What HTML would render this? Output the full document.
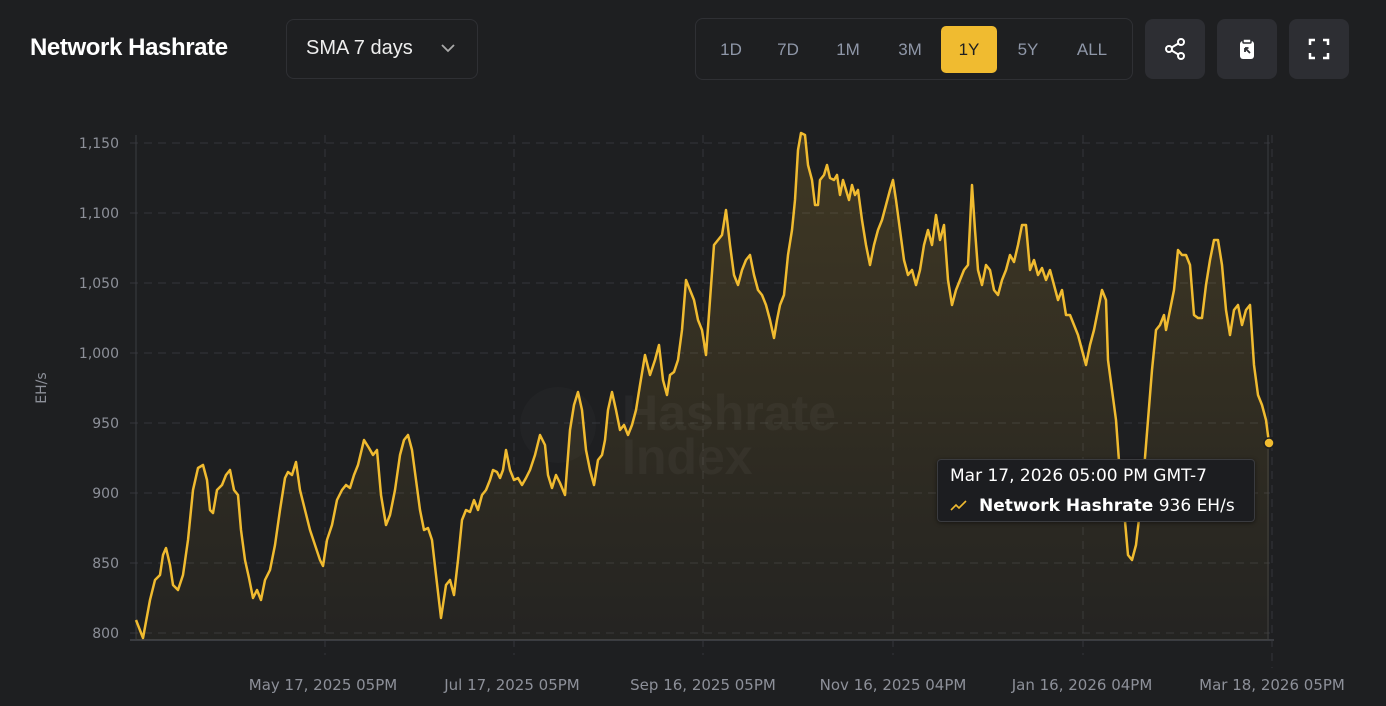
<!DOCTYPE html>
<html><head><meta charset="utf-8"><style>
*{box-sizing:border-box;margin:0;padding:0}
body{width:1386px;height:706px;background:#1e1f21;font-family:"Liberation Sans",sans-serif;position:relative;overflow:hidden;color:#fff}
.title{position:absolute;left:30px;top:34px;font-size:24px;font-weight:bold;letter-spacing:-0.4px}
.sel{position:absolute;left:286px;top:19px;width:192px;height:60px;border:1px solid #2f3034;border-radius:8px;font-size:20px;padding:17px 0 0 19px;color:#eee}
.sel svg{position:absolute;left:153px;top:23px}
.tabs{position:absolute;left:695px;top:18px;width:438px;height:62px;border:1px solid #2f3034;border-radius:8px}
.tab{position:absolute;top:7px;height:47px;line-height:47px;font-size:17px;color:#8f97a8;text-align:center;width:56px}
.tab.on{background:#f0bb30;color:#1e1f21;border-radius:5px}
.btn{position:absolute;top:19px;width:60px;height:60px;background:#2d2e33;border-radius:8px}
.btn svg{position:absolute;left:18px;top:18px}
.ax{font-size:14px;fill:#8d9099;font-family:"DejaVu Sans",sans-serif}
.tip{position:absolute;left:937px;top:459px;width:318px;height:63px;background:#1c1d20;border:1px solid #3a3b3f;border-radius:4px;box-shadow:0 1px 4px rgba(0,0,0,.5);font-family:"DejaVu Sans",sans-serif;font-size:17px;color:#fff}
</style></head><body>
<div class="title">Network Hashrate</div>
<div class="sel">SMA 7 days<svg width="16" height="10" viewBox="0 0 16 10"><path d="M2 2l6 6 6-6" stroke="#aaa" stroke-width="1.8" fill="none"/></svg></div>
<div class="tabs">
<div class="tab" style="left:7px">1D</div>
<div class="tab" style="left:64px">7D</div>
<div class="tab" style="left:124px">1M</div>
<div class="tab" style="left:186px">3M</div>
<div class="tab on" style="left:245px">1Y</div>
<div class="tab" style="left:304px">5Y</div>
<div class="tab" style="left:368px">ALL</div>
</div>
<div class="btn" style="left:1145px"><svg width="24" height="24" viewBox="0 0 24 24" fill="none" stroke="#fff" stroke-width="2"><circle cx="18" cy="5" r="3"/><circle cx="6" cy="12" r="3"/><circle cx="18" cy="19" r="3"/><path d="M8.6 13.5l6.8 4M15.4 6.5l-6.8 4"/></svg></div>
<div class="btn" style="left:1217px"><svg width="24" height="24" viewBox="0 0 24 24"><rect x="5" y="4" width="14" height="18" rx="3" fill="#fff"/><rect x="8" y="2" width="8" height="4" rx="1" fill="#fff" stroke="#2d2e33" stroke-width="1.5"/><path d="M10 11v4h0M10 11h3.5M10 11l5 5" stroke="#2d2e33" stroke-width="1.8" fill="none"/></svg></div>
<div class="btn" style="left:1289px"><svg width="24" height="24" viewBox="0 0 24 24" fill="none" stroke="#fff" stroke-width="2.5"><path d="M3 8V3h5M16 3h5v5M21 16v5h-5M8 21H3v-5"/></svg></div>

<svg width="1386" height="706" style="position:absolute;left:0;top:0">
<defs><linearGradient id="g" x1="0" y1="0" x2="0" y2="1"><stop offset="0" stop-color="#f0bb30" stop-opacity=".16"/><stop offset="1" stop-color="#f0bb30" stop-opacity=".03"/></linearGradient></defs>
<g stroke="#34363b" stroke-width="1" stroke-dasharray="8 6">
<line x1="130" y1="143" x2="1270" y2="143"/><line x1="130" y1="213" x2="1270" y2="213"/><line x1="130" y1="283" x2="1270" y2="283"/><line x1="130" y1="353" x2="1270" y2="353"/><line x1="130" y1="423" x2="1270" y2="423"/><line x1="130" y1="493" x2="1270" y2="493"/><line x1="130" y1="563" x2="1270" y2="563"/><line x1="130" y1="633" x2="1270" y2="633"/>
<line x1="325" y1="135" x2="325" y2="655"/><line x1="514" y1="135" x2="514" y2="655"/><line x1="703" y1="135" x2="703" y2="655"/><line x1="893" y1="135" x2="893" y2="655"/><line x1="1083" y1="135" x2="1083" y2="655"/><line x1="1272" y1="135" x2="1272" y2="668"/>
</g>
<line x1="136" y1="135" x2="136" y2="640" stroke="#3a3c41"/>
<line x1="130" y1="640" x2="1274" y2="640" stroke="#3a3c41" stroke-width="2"/>
<line x1="1268" y1="135" x2="1268" y2="640" stroke="#3a3c41"/>
<g class="ax" text-anchor="end"><text x="119" y="148">1,150</text><text x="119" y="218">1,100</text><text x="119" y="288">1,050</text><text x="119" y="358">1,000</text><text x="119" y="428">950</text><text x="119" y="498">900</text><text x="119" y="568">850</text><text x="119" y="638">800</text></g>
<text class="ax" transform="translate(46,388) rotate(-90)" text-anchor="middle">EH/s</text>
<g class="ax" text-anchor="middle" style="font-size:15px"><text x="323" y="690">May 17, 2025 05PM</text><text x="512" y="690">Jul 17, 2025 05PM</text><text x="703" y="690">Sep 16, 2025 05PM</text><text x="893" y="690">Nov 16, 2025 04PM</text><text x="1082" y="690">Jan 16, 2026 04PM</text><text x="1272" y="690">Mar 18, 2026 05PM</text></g>
<g fill="#ffffff" opacity=".035" font-weight="bold" font-size="50"><text x="622" y="430">Hashrate</text><text x="622" y="474">Index</text></g>
<circle cx="558" cy="425" r="38" fill="#fff" opacity=".02"/>
<path d="M136,620 143,638 150,600 155,580 160,575 163,555 166,548 170,565 173,585 178,590 183,575 188,540 193,490 198,468 203,465 207,480 210,510 213,513 217,490 222,485 226,475 230,470 234,490 238,495 241,530 245,560 249,578 253,598 257,590 261,600 265,580 270,570 275,545 280,510 285,478 288,472 292,475 296,462 300,490 305,510 310,530 315,545 320,560 323,566 327,540 332,525 337,500 342,490 346,485 350,488 354,475 358,465 364,440 369,448 373,455 377,450 381,495 386,525 390,515 395,490 400,455 404,440 408,435 412,450 416,480 420,510 424,530 428,528 432,540 436,575 441,618 446,585 450,580 454,595 458,560 462,520 466,510 470,512 474,500 478,510 482,495 486,490 490,480 493,470 497,472 500,478 503,470 506,450 510,470 514,480 518,478 522,485 526,478 530,470 535,455 540,435 545,445 548,475 552,488 556,475 560,483 565,495 570,430 574,405 578,392 582,410 586,450 590,470 594,485 598,460 602,455 605,440 608,410 612,392 616,410 620,430 624,425 628,435 632,425 636,410 640,385 645,355 650,375 655,360 659,345 663,380 667,395 670,375 674,372 678,360 682,330 686,280 690,290 694,300 698,320 702,330 706,355 710,300 714,245 718,240 722,235 726,210 730,245 734,275 738,285 742,270 746,260 750,255 754,275 758,290 762,295 766,305 770,320 774,338 777,320 780,305 784,295 788,255 792,230 795,200 798,150 801,133 805,135 808,165 812,180 815,205 818,205 820,180 824,175 827,165 830,178 834,180 837,175 840,195 843,180 846,190 849,200 852,185 855,195 858,190 862,220 866,245 870,265 874,245 878,230 882,220 886,205 890,190 893,180 896,200 900,230 904,260 908,275 912,270 916,285 920,270 924,245 928,230 932,245 936,215 940,240 944,225 948,280 952,305 956,290 960,280 964,270 968,265 972,185 975,230 978,270 982,285 986,265 990,270 994,290 998,295 1002,280 1006,270 1010,255 1014,262 1018,245 1022,225 1026,225 1030,270 1034,260 1038,275 1042,268 1046,280 1050,270 1054,285 1058,300 1062,290 1066,315 1070,315 1074,325 1078,335 1082,350 1086,365 1090,345 1094,330 1098,310 1102,290 1106,300 1108,360 1112,390 1116,420 1120,475 1124,510 1128,555 1132,560 1136,545 1140,510 1144,470 1148,420 1152,370 1156,330 1160,325 1164,315 1166,330 1168,320 1170,310 1174,290 1178,250 1182,255 1186,255 1190,265 1194,315 1198,318 1202,318 1206,285 1210,260 1214,240 1218,240 1222,265 1226,310 1230,335 1234,310 1238,305 1242,325 1246,310 1250,305 1254,365 1258,395 1262,405 1266,420 1269,443 1269,640 136,640Z" fill="url(#g)"/>
<path d="M136,620 143,638 150,600 155,580 160,575 163,555 166,548 170,565 173,585 178,590 183,575 188,540 193,490 198,468 203,465 207,480 210,510 213,513 217,490 222,485 226,475 230,470 234,490 238,495 241,530 245,560 249,578 253,598 257,590 261,600 265,580 270,570 275,545 280,510 285,478 288,472 292,475 296,462 300,490 305,510 310,530 315,545 320,560 323,566 327,540 332,525 337,500 342,490 346,485 350,488 354,475 358,465 364,440 369,448 373,455 377,450 381,495 386,525 390,515 395,490 400,455 404,440 408,435 412,450 416,480 420,510 424,530 428,528 432,540 436,575 441,618 446,585 450,580 454,595 458,560 462,520 466,510 470,512 474,500 478,510 482,495 486,490 490,480 493,470 497,472 500,478 503,470 506,450 510,470 514,480 518,478 522,485 526,478 530,470 535,455 540,435 545,445 548,475 552,488 556,475 560,483 565,495 570,430 574,405 578,392 582,410 586,450 590,470 594,485 598,460 602,455 605,440 608,410 612,392 616,410 620,430 624,425 628,435 632,425 636,410 640,385 645,355 650,375 655,360 659,345 663,380 667,395 670,375 674,372 678,360 682,330 686,280 690,290 694,300 698,320 702,330 706,355 710,300 714,245 718,240 722,235 726,210 730,245 734,275 738,285 742,270 746,260 750,255 754,275 758,290 762,295 766,305 770,320 774,338 777,320 780,305 784,295 788,255 792,230 795,200 798,150 801,133 805,135 808,165 812,180 815,205 818,205 820,180 824,175 827,165 830,178 834,180 837,175 840,195 843,180 846,190 849,200 852,185 855,195 858,190 862,220 866,245 870,265 874,245 878,230 882,220 886,205 890,190 893,180 896,200 900,230 904,260 908,275 912,270 916,285 920,270 924,245 928,230 932,245 936,215 940,240 944,225 948,280 952,305 956,290 960,280 964,270 968,265 972,185 975,230 978,270 982,285 986,265 990,270 994,290 998,295 1002,280 1006,270 1010,255 1014,262 1018,245 1022,225 1026,225 1030,270 1034,260 1038,275 1042,268 1046,280 1050,270 1054,285 1058,300 1062,290 1066,315 1070,315 1074,325 1078,335 1082,350 1086,365 1090,345 1094,330 1098,310 1102,290 1106,300 1108,360 1112,390 1116,420 1120,475 1124,510 1128,555 1132,560 1136,545 1140,510 1144,470 1148,420 1152,370 1156,330 1160,325 1164,315 1166,330 1168,320 1170,310 1174,290 1178,250 1182,255 1186,255 1190,265 1194,315 1198,318 1202,318 1206,285 1210,260 1214,240 1218,240 1222,265 1226,310 1230,335 1234,310 1238,305 1242,325 1246,310 1250,305 1254,365 1258,395 1262,405 1266,420 1269,443" fill="none" stroke="#f0bb30" stroke-width="2.5" stroke-linejoin="round"/>
<circle cx="1269" cy="443" r="5" fill="#f0bb30" stroke="#1e1f21" stroke-width="1.5"/>
</svg>
<div class="tip">
<div style="position:absolute;left:12px;top:6px">Mar 17, 2026 05:00 PM GMT-7</div>
<svg style="position:absolute;left:12px;top:39px" width="18" height="12" viewBox="0 0 18 12"><path d="M1 11l5-5 3 3 7-7" stroke="#f0bb30" stroke-width="1.6" fill="none"/></svg>
<div style="position:absolute;left:41px;top:36px"><b>Network Hashrate</b> 936 EH/s</div>
</div>
</body></html>
